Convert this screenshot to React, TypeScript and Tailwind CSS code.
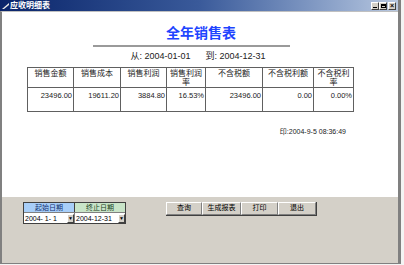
const cols = [
  { w: 46, head: ["销售金额"], val: "23496.00" },
  { w: 47, head: ["销售成本"], val: "19611.20" },
  { w: 46, head: ["销售利润"], val: "3884.80" },
  { w: 39, head: ["销售利润", "率"], val: "16.53%" },
  { w: 57, head: ["不含税额"], val: "23496.00" },
  { w: 51, head: ["不含税利额"], val: "0.00" },
  { w: 40, head: ["不含税利", "率"], val: "0.00%" },
];

function TitleButton({ children }: { children: React.ReactNode }) {
  return (
    <div className="w-[8px] h-[8px] bg-[#d4d0c8] border border-t-white border-l-white border-r-[#404040] border-b-[#404040] flex items-center justify-center text-[7px] leading-none text-black font-bold">
      {children}
    </div>
  );
}

export default function App() {
  return (
    <div
      className="w-[404px] h-[265px] bg-[#f4f4f4] overflow-hidden"
      style={{ fontFamily: '"Liberation Sans", "Noto Sans CJK SC", sans-serif' }}
    >
      <div className="w-[401px] h-[264px] flex flex-col bg-[#d4d0c8] border-r-[3px] border-r-[#808080] border-b border-b-[#808080]">
        {/* title bar */}
        <div className="h-[11px] flex items-center justify-between bg-gradient-to-r from-[#0a246a] via-[#3a5a9a] to-[#b8c8e0] pl-[2px] pr-[2px]">
          <div className="flex items-center gap-[1px]">
            <svg width="7" height="6" viewBox="0 0 7 6">
              <path d="M0 6 L7 0 L7 2 L2 6 Z" fill="#e8e8e8" />
            </svg>
            <span className="text-[8px] leading-none font-bold text-white">应收明细表</span>
          </div>
          <div className="flex items-center">
            <TitleButton>
              <span className="block w-[4px] h-[1px] bg-black mt-[3px]" />
            </TitleButton>
            <TitleButton>
              <span className="block w-[5px] h-[4px] border border-black border-t-2" />
            </TitleButton>
            <div className="ml-[1px]">
              <TitleButton>×</TitleButton>
            </div>
          </div>
        </div>

        {/* report area */}
        <div className="h-[186px] bg-white border-t border-t-[#c0c0c0] border-l-2 border-l-[#808080] flex flex-col items-center text-[#222]">
          <div className="mt-[13px] ml-[2px] text-[14px] leading-[16px] font-semibold text-[#1e44ff]">全年销售表</div>
          <div className="mt-[4px] ml-[-17px] w-[197px] h-[2px] bg-[#9a9a9a]" />
          <div className="mt-[3px] ml-[-4px] flex gap-[15px] text-[9px] leading-[12px]">
            <span>从: 2004-01-01</span>
            <span>到: 2004-12-31</span>
          </div>
          <table className="self-start ml-[25px] mt-[5px] border-collapse text-[7.5px] leading-[9px] table-fixed w-[326px]">
            <tbody>
              <tr className="h-[20px]">
                {cols.map((c) => (
                  <td
                    key={c.val + c.w}
                    style={{ width: c.w }}
                    className="border border-[#606060] align-top text-center pt-[1px] px-0 text-[8px]"
                  >
                    {c.head.map((h) => (
                      <div key={h}>{h}</div>
                    ))}
                  </td>
                ))}
              </tr>
              <tr className="h-[24px]">
                {cols.map((c) => (
                  <td
                    key={c.val + c.w}
                    className="border border-[#606060] align-top text-right pt-[3px] pr-[1px]"
                  >
                    {c.val}
                  </td>
                ))}
              </tr>
            </tbody>
          </table>
          <div className="self-end mr-[52px] mt-[15px] text-[7px] leading-[10px]">印:2004-9-5 08:36:49</div>
        </div>

        {/* bottom panel */}
        <div className="flex-1 flex items-start pt-[5px] pl-[21px] border-l-2 border-l-[#808080]">
          <div className="w-[103px] border border-[#404040] flex flex-col text-[7px] leading-none">
            <div className="flex h-[9px]">
              <div className="w-[51px] bg-[#a8cef8] border-r border-[#404040] flex items-center justify-center text-[#103070]">
                起始日期
              </div>
              <div className="flex-1 bg-[#c8e4c8] flex items-center justify-center text-[#204020]">
                终止日期
              </div>
            </div>
            <div className="flex h-[11px] border-t border-[#808080]">
              <div className="w-[51px] bg-white flex items-center justify-between border-r border-[#808080]">
                <span className="pl-[1px]">2004- 1- 1</span>
                <span className="w-[7px] h-[9px] bg-[#d4d0c8] border border-t-white border-l-white border-r-[#404040] border-b-[#404040] flex items-center justify-center text-[5px]">▼</span>
              </div>
              <div className="flex-1 bg-white flex items-center justify-between">
                <span className="pl-[1px]">2004-12-31</span>
                <span className="w-[7px] h-[9px] bg-[#d4d0c8] border border-t-white border-l-white border-r-[#404040] border-b-[#404040] flex items-center justify-center text-[5px]">▼</span>
              </div>
            </div>
          </div>
          <div className="ml-[40px] flex h-[14px] border-r border-b border-[#404040] text-[7px]">
            {[
              { t: "查询", w: 36 },
              { t: "生成报表", w: 39 },
              { t: "打印", w: 37 },
              { t: "退出", w: 38 },
            ].map((b) => (
              <div
                key={b.t}
                style={{ width: b.w }}
                className="bg-[#d4d0c8] border border-t-white border-l-white border-r-[#808080] border-b-[#808080] flex items-center justify-center"
              >
                {b.t}
              </div>
            ))}
          </div>
        </div>
      </div>
    </div>
  );
}
